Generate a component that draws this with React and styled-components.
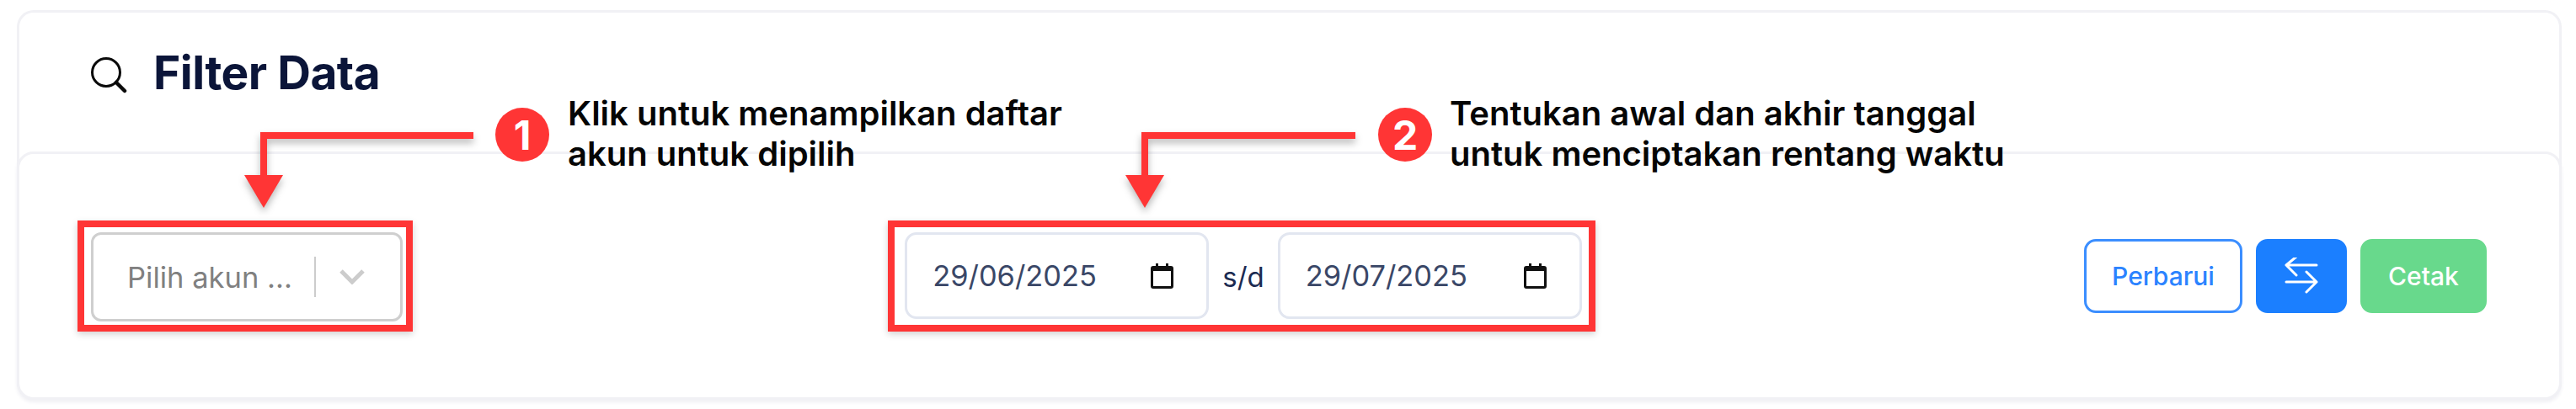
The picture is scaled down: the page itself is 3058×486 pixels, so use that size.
import React from "react";
import styled, { createGlobalStyle } from "styled-components";

const Global = createGlobalStyle`
  html, body { margin: 0; padding: 0; background: #fff; }
  body { font-family: Inter, "Noto Sans", sans-serif; width: 3058px; height: 486px; overflow: hidden; }
`;

const Page = styled.div`
  position: relative;
  width: 3058px;
  height: 486px;
  padding: 12px 17px 11px 20px;
  box-sizing: border-box;
`;

const Card = styled.section`
  height: 463px;
  display: flex;
  flex-direction: column;
  box-sizing: border-box;
  border: 3px solid #f1f1f5;
  border-bottom: 0;
  border-radius: 20px;
  background: #fff;
`;

const Header = styled.header`
  height: 165px;
  flex: none;
  display: flex;
  align-items: flex-start;
  gap: 31px;
  padding: 48px 0 0 84px;
  box-sizing: border-box;
`;

const Title = styled.h1`
  margin: 0;
  font-size: 55px;
  line-height: 46px;
  font-weight: 700;
  letter-spacing: -0.5px;
  color: #0b1539;
`;

const Body = styled.div`
  flex: 1;
  margin: 0 -3px;
  display: flex;
  align-items: flex-start;
  justify-content: space-between;
  padding: 93px 86px 0 85px;
  border: 3px solid #f1f1f5;
  border-radius: 20px;
  box-shadow: 0 3px 4px #f0f0f4;
  background: #fff;
`;

const Select = styled.div`
  width: 370px;
  height: 106px;
  box-sizing: border-box;
  display: flex;
  align-items: center;
  border: 3px solid #cfcfcf;
  border-radius: 12px;
  padding: 0 0 0 40px;
  color: #808080;
  font-size: 34.5px;
  font-weight: 400;
`;

const Placeholder = styled.span`
  width: 222px;
  flex: none;
  white-space: nowrap;
`;

const Separator = styled.span`
  width: 2px;
  height: 48px;
  background: #cccccc;
`;

const ChevronBox = styled.span`
  margin-left: 28px;
  display: flex;
`;

const DateGroup = styled.div`
  display: flex;
  align-items: center;
  gap: 16px;
  height: 106px;
`;

const DateField = styled.div`
  width: 361px;
  height: 103px;
  box-sizing: border-box;
  display: flex;
  align-items: center;
  justify-content: space-between;
  padding: 0 39px 0 30px;
  border: 3px solid #e2e6f0;
  border-radius: 14px;
  font-size: 34.4px;
  color: #3a4767;
  align-self: flex-start;
`;

const Sd = styled.span`
  font-size: 33px;
  color: #1c2b52;
`;

const Buttons = styled.div`
  display: flex;
  gap: 16px;
  padding-top: 8px;
`;

const Button = styled.button`
  height: 88px;
  width: ${(p) => p.$w}px;
  box-sizing: border-box;
  display: flex;
  align-items: center;
  justify-content: center;
  padding: 0;
  border-radius: 14px;
  border: 3px solid ${(p) => p.$border};
  background: ${(p) => p.$bg};
  color: ${(p) => p.$color};
  font-family: inherit;
  font-size: 30px;
  font-weight: 500;
`;

const Frame = styled.div`
  position: absolute;
  left: ${(p) => p.$x}px;
  top: 262px;
  width: ${(p) => p.$w}px;
  height: 132px;
  box-sizing: border-box;
  border: 8px solid #ff3535;
  box-shadow: 0 3px 8px rgba(0, 0, 0, 0.18);
`;

const Pointer = styled.svg`
  position: absolute;
  left: ${(p) => p.$x}px;
  top: 150px;
  overflow: visible;
  filter: drop-shadow(0 5px 4px rgba(0, 0, 0, 0.28));
`;

const Badge = styled.div`
  position: absolute;
  left: ${(p) => p.$x}px;
  top: 128px;
  width: 64px;
  height: 64px;
  border-radius: 50%;
  background: #ff3535;
  color: #fff;
  display: flex;
  align-items: center;
  justify-content: center;
  font-size: 48px;
  font-weight: 700;
`;

const Note = styled.p`
  position: absolute;
  left: ${(p) => p.$x}px;
  top: 111px;
  margin: 0;
  font-size: 40px;
  line-height: 48px;
  font-weight: 600;
  color: #050505;
  white-space: nowrap;
`;

const Calendar = () => (
  <svg width="27" height="30" viewBox="0 0 27 30">
    <path d="M6 0h3v3h9V0h3v3h3a3 3 0 0 1 3 3v21a3 3 0 0 1-3 3H3a3 3 0 0 1-3-3V6a3 3 0 0 1 3-3h3z" fill="#111" />
    <rect x="3" y="9" width="21" height="18" fill="#fff" />
  </svg>
);

const SearchIcon = () => (
  <svg width="44" height="44" viewBox="0 0 44 44" fill="none" stroke="#0a0a0a" style={{ marginTop: 4 }}>
    <circle cx="19" cy="19" r="16.5" strokeWidth="3" />
    <path d="M31 31 41 41" strokeWidth="4.5" strokeLinecap="round" />
  </svg>
);

const Chevron = () => (
  <svg width="30" height="18" viewBox="0 0 30 18" fill="none" stroke="#cccccc" strokeWidth="5">
    <path d="M2 2 15 15 28 2" />
  </svg>
);

const SwapIcon = () => (
  <svg width="40" height="44" viewBox="0 0 40 44" fill="none" stroke="#fff" strokeWidth="3" strokeLinecap="round" strokeLinejoin="round">
    <path d="M38 9H2M14 -1 2 9l12 12" />
    <path d="M2 29h36M26 17l12 12-12 12" />
  </svg>
);

const Arrow = ({ x, w }) => (
  <Pointer $x={x} $w={w} width={w} height="100" viewBox={`0 0 ${w} 100`}>
    <path d={`M${w} 7H27V58H35V15H${w}z`} fill="#ff3535" />
    <path d="M8 58H54L31 97z" fill="#ff3535" />
  </Pointer>
);

export default function App() {
  return (
    <Page>
      <Global />
      <Card>
        <Header>
          <SearchIcon />
          <Title>Filter Data</Title>
        </Header>
        <Body>
          <Select>
            <Placeholder>Pilih akun ...</Placeholder>
            <Separator />
            <ChevronBox><Chevron /></ChevronBox>
          </Select>
          <DateGroup>
            <DateField>29/06/2025<Calendar /></DateField>
            <Sd>s/d</Sd>
            <DateField>29/07/2025<Calendar /></DateField>
          </DateGroup>
          <Buttons>
            <Button $w={188} $border="#3b8eff" $bg="#fff" $color="#2b83ff">Perbarui</Button>
            <Button $w={108} $border="#1b7fff" $bg="#1b7fff" $color="#fff"><SwapIcon /></Button>
            <Button $w={150} $border="#68d98c" $bg="#68d98c" $color="#fff">Cetak</Button>
          </Buttons>
        </Body>
      </Card>

      <Frame $x={92} $w={398} />
      <Frame $x={1054} $w={840} />
      <Arrow x={282} w={280} />
      <Arrow x={1328} w={281} />
      <Badge $x={588}>1</Badge>
      <Badge $x={1636}>2</Badge>
      <Note $x={674}>Klik untuk menampilkan daftar<br />akun untuk dipilih</Note>
      <Note $x={1721}>Tentukan awal dan akhir tanggal<br />untuk menciptakan rentang waktu</Note>
    </Page>
  );
}
